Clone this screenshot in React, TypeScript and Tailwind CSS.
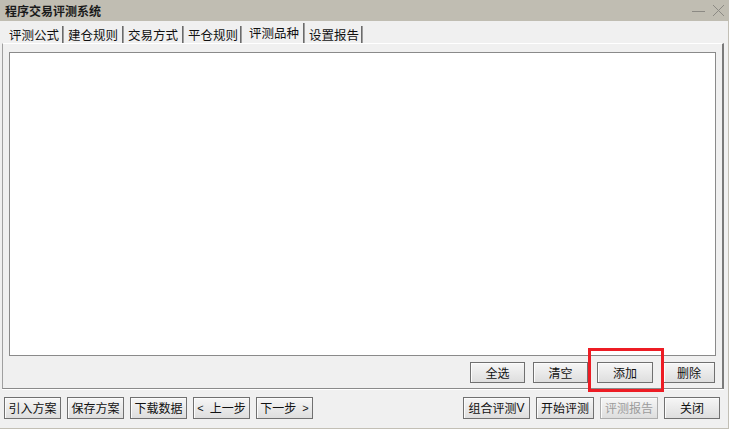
import React from "react";

const FONT = "font-['Noto_Sans_CJK_SC','Noto_Sans',sans-serif]";

function Btn({
  children,
  w,
  h = "h-[21px]",
  disabled = false,
  className = "",
}: {
  children: React.ReactNode;
  w: string;
  h?: string;
  disabled?: boolean;
  className?: string;
}) {
  return (
    <div
      className={`${w} ${h} ${className} flex items-center justify-center border ${
        disabled ? "border-[#adadad] text-[#9c9c9c]" : "border-[#707070] text-[#111]"
      } bg-linear-to-b from-[#f6f6f6] to-[#dedede] text-[12px] leading-none shadow-[inset_1px_1px_0_#fcfcfc]`}
    >
      {children}
    </div>
  );
}

function Tab({
  label,
  w,
  selected = false,
}: {
  label: string;
  w: string;
  selected?: boolean;
}) {
  return (
    <div
      className={`${w} ${
        selected ? "h-[20px] leading-[20px] pl-[8px]" : "h-[17px] leading-[17px] pl-[5px]"
      } border-r border-r-[#6b6b6b] shadow-[1px_0_0_#9e9e9e] text-[12.5px] text-[#111] whitespace-nowrap`}
    >
      {label}
    </div>
  );
}

export default function App() {
  return (
    <div className={`${FONT} relative w-[729px] h-[429px] bg-[#f0f0f0] flex flex-col overflow-hidden`}>
      {/* Title bar */}
      <div className="h-[21px] bg-[#c0bdb2] flex items-center justify-between pl-[5px] pr-[4px] shrink-0">
        <span className="text-[12px] font-bold leading-none text-[#1a1a1a]">程序交易评测系统</span>
        <div className="flex items-center gap-[6px]">
          <svg width="15" height="12" viewBox="0 0 15 12">
            <line x1="1" y1="6.5" x2="14" y2="6.5" stroke="#8c8a84" strokeWidth="1" />
          </svg>
          <svg width="13" height="13" viewBox="0 0 13 13">
            <line x1="1" y1="1" x2="12" y2="12" stroke="#8c8a84" strokeWidth="1" />
            <line x1="12" y1="1" x2="1" y2="12" stroke="#8c8a84" strokeWidth="1" />
          </svg>
        </div>
      </div>

      <div className="flex-1 flex flex-col border-r border-b border-[#c2bfb5]">
        {/* Tabs */}
        <div className="h-[22px] flex items-end pl-[4px] shrink-0">
          <Tab label="评测公式" w="w-[59px]" />
          <Tab label="建仓规则" w="w-[60px]" />
          <Tab label="交易方式" w="w-[60px]" />
          <Tab label="平仓规则" w="w-[58px]" />
          <Tab label="评测品种" w="w-[63px]" selected />
          <Tab label="设置报告" w="w-[58px]" />
        </div>

        {/* Panel */}
        <div className="ml-[2px] w-[722px] h-[346px] border-t border-t-white border-l border-l-[#a0a0a0] border-r-2 border-r-[#7a7a7a] border-b border-b-[#8a8a8a] shadow-[0_1px_0_#ffffff] flex flex-col pt-[8px] pl-[6px] pr-[5px] shrink-0">
          <div className="w-[707px] h-[304px] bg-white border border-[#8a8a8a]" />
          <div className="mt-[6px] flex items-center justify-end pr-[2px]">
            <Btn w="w-[55px]">全选</Btn>
            <Btn w="w-[55px]" className="ml-[8px]">清空</Btn>
            <Btn w="w-[56px]" className="ml-[9px]">添加</Btn>
            <Btn w="w-[52px]" className="ml-[10px]">删除</Btn>
          </div>
        </div>

        {/* Bottom buttons */}
        <div className="mt-[8px] flex items-center justify-between pl-[4px] pr-[8px]">
          <div className="flex gap-[6px]">
            <Btn w="w-[57px]" h="h-[22px]">引入方案</Btn>
            <Btn w="w-[57px]" h="h-[22px]">保存方案</Btn>
            <Btn w="w-[57px]" h="h-[22px]">下载数据</Btn>
            <Btn w="w-[57px]" h="h-[22px]">
              <span className="mr-[6px] font-['Liberation_Sans',sans-serif] text-[11px]">&lt;</span>上一步
            </Btn>
            <Btn w="w-[57px]" h="h-[22px]">
              下一步<span className="ml-[6px] font-['Liberation_Sans',sans-serif] text-[11px]">&gt;</span>
            </Btn>
          </div>
          <div className="flex gap-[6px]">
            <Btn w="w-[67px]" h="h-[22px]">
              组合评测<span className="font-['Liberation_Sans',sans-serif] text-[12px]">V</span>
            </Btn>
            <Btn w="w-[58px]" h="h-[22px]">开始评测</Btn>
            <Btn w="w-[58px]" h="h-[22px]" disabled>评测报告</Btn>
            <Btn w="w-[56px]" h="h-[22px]">关闭</Btn>
          </div>
        </div>
      </div>

      {/* Red highlight */}
      <div className="absolute left-[588px] top-[348px] w-[76px] h-[44px] border-[3px] border-[#ed1c24] pointer-events-none" />
    </div>
  );
}
